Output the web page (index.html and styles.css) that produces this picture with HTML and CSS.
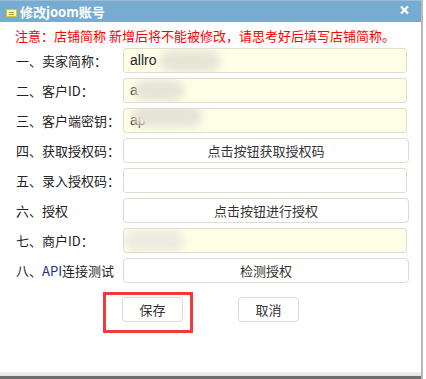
FILE: index.html
```html
<!DOCTYPE html>
<html lang="zh-CN">
<head>
<meta charset="utf-8">
<title>修改joom账号</title>
<link rel="stylesheet" href="styles.css">
</head>
<body>
<div class="dialog">
  <div class="titlebar">
    <svg class="title-icon" width="11" height="8" viewBox="0 0 11 8"><rect x="0.5" y="0.5" width="10" height="7" fill="#fff9b8" stroke="#d8c040"/><line x1="3" y1="3.5" x2="8" y2="3.5" stroke="#b89a20"/><line x1="3" y1="5.5" x2="8" y2="5.5" stroke="#b89a20"/></svg>
    <span class="title-text">修改joom账号</span>
    <svg class="close" width="9" height="8" viewBox="0 0 9 8"><path d="M1 0.5 L8 7.5 M8 0.5 L1 7.5" stroke="#fff" stroke-width="2.2"/></svg>
  </div>
  <div class="content">
    <p class="notice">注意：店铺简称 新增后将不能被修改，请思考好后填写店铺简称。</p>
    <div class="row"><label class="lbl">一、卖家简称：</label><div class="field">allro<span class="blur b1"></span></div></div>
    <div class="row"><label class="lbl">二、客户ID：</label><div class="field">a<span class="blur b2"></span></div></div>
    <div class="row"><label class="lbl">三、客户端密钥：</label><div class="field">ap<span class="blur b3"></span></div></div>
    <div class="row"><label class="lbl">四、获取授权码：</label><button class="btn wide">点击按钮获取授权码</button></div>
    <div class="row"><label class="lbl">五、录入授权码：</label><div class="field white"></div></div>
    <div class="row"><label class="lbl">六、授权</label><button class="btn wide">点击按钮进行授权</button></div>
    <div class="row"><label class="lbl">七、商户ID：</label><div class="field"><span class="blur b4"></span></div></div>
    <div class="row"><label class="lbl">八、<span class="api">API</span>连接测试</label><button class="btn wide">检测授权</button></div>
    <div class="actions">
      <button class="btn small">保存</button>
      <button class="btn small">取消</button>
      <div class="highlight"></div>
    </div>
  </div>
  <div class="bottom"></div>
</div>
</body>
</html>
```
FILE: styles.css
```css
* { box-sizing: border-box; }
html, body { margin: 0; padding: 0; background: #fff; }
body {
  font-family: "Noto Sans CJK SC", "Liberation Sans", sans-serif;
  font-size: 13px;
  color: #222;
  width: 426px;
  height: 379px;
  overflow: hidden;
}
.dialog {
  position: relative;
  width: 423px;
  height: 379px;
  border-right: 2px solid #b8b8b8;
  background: #fff;
  display: flex;
  flex-direction: column;
}
.titlebar {
  height: 22px;
  background: #77acd0;
  border-top: 1px solid #9bbdd6;
  display: flex;
  align-items: center;
  padding-left: 6px;
  color: #fff;
}
.title-icon { flex: none; margin-top: 2px; }
.title-text {
  font-weight: bold;
  font-size: 13px;
  margin-left: 3px;
  line-height: 20px;
}
.close { margin-left: auto; margin-right: 12px; margin-top: -4px; }
.content {
  position: relative;
  flex: 1;
  padding: 5px 0 0 16px;
}
.notice {
  margin: 0 0 4px -1px;
  color: #f00;
  font-size: 13px;
  line-height: 17px;
  height: 17px;
  white-space: nowrap;
}
.row {
  display: flex;
  align-items: center;
  height: 25px;
  margin-bottom: 5px;
}
.lbl {
  width: 107px;
  flex: none;
  font-size: 13px;
  color: #222;
  white-space: nowrap;
}
.api { color: #26307a; }
.field {
  width: 284px;
  height: 25px;
  border: 1px solid #deddd0;
  border-radius: 3px;
  background: #fffee6;
  font-family: "Liberation Sans", sans-serif;
  font-size: 14px;
  color: #222;
  padding-left: 6px;
  line-height: 23px;
  position: relative;
  overflow: hidden;
  white-space: nowrap;
}
.field.white { background: #fff; }
.blur {
  position: absolute;
  top: 1px;
  height: 22px;
  background: #e6e4d6;
  border-radius: 10px;
  filter: blur(4px);
}
.b1 { left: 36px; width: 60px; }
.b2 { left: 10px; width: 50px; }
.b3 { left: 8px; width: 70px; top: -4px; }
.b4 { left: 0px; width: 60px; background: #ecebe0; }
.btn {
  font-family: "Noto Sans CJK SC", "Liberation Sans", sans-serif;
  font-size: 13px;
  color: #333;
  background: #fff;
  border: 1px solid #dcdccc;
  border-radius: 4px;
  padding: 0;
  height: 25px;
  line-height: 23px;
}
.btn.wide { width: 286px; }
.actions {
  position: relative;
  display: flex;
  gap: 55px;
  padding-left: 106px;
  margin-top: 14px;
}
.btn.small { width: 61px; height: 25px; }
.highlight {
  position: absolute;
  left: 87px;
  top: -5px;
  width: 90px;
  height: 41px;
  border: 3px solid #f33a3a;
}
.bottom {
  height: 7px;
  background: linear-gradient(#f2f2f2, #e4e4e4);
  border-bottom: 3px solid #6e6e6e;
}
```
